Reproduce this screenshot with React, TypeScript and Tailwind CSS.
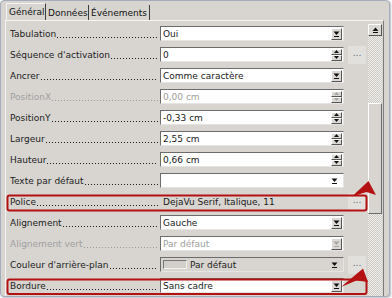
import React from 'react';

/**
 * Control properties panel — form fields of a LibreOffice-style property browser.
 */

type Kind = 'list' | 'spin' | 'combo' | 'color' | 'readonly';

interface Row {
  label: string;
  value: string;
  kind: Kind;
  disabled?: boolean;
  more?: boolean; // shows the "..." button
}

const rows: Row[] = [
  { label: 'Tabulation', value: 'Oui', kind: 'list' },
  { label: "Séquence d'activation", value: '0', kind: 'spin', more: true },
  { label: 'Ancrer', value: 'Comme caractère', kind: 'list' },
  { label: 'PositionX', value: '0,00 cm', kind: 'spin', disabled: true },
  { label: 'PositionY', value: '-0,33 cm', kind: 'spin' },
  { label: 'Largeur', value: '2,55 cm', kind: 'spin' },
  { label: 'Hauteur', value: '0,66 cm', kind: 'spin' },
  { label: 'Texte par défaut', value: '', kind: 'combo' },
  { label: 'Police', value: 'DejaVu Serif, Italique, 11', kind: 'readonly', more: true },
  { label: 'Alignement', value: 'Gauche', kind: 'list' },
  { label: 'Alignement vert', value: 'Par défaut', kind: 'list', disabled: true },
  { label: "Couleur d'arrière-plan", value: 'Par défaut', kind: 'color', more: true },
  { label: 'Bordure', value: 'Sans cadre', kind: 'list' },
];

function DownArrow({ muted }: { muted?: boolean }) {
  const c = muted ? '#a5a5a5' : '#111';
  return (
    <svg width="7" height="6" viewBox="0 0 7 6">
      <polygon points="0.5,0.5 6.5,0.5 3.5,4" fill={c} />
      <rect x="1" y="5" width="5" height="1" fill={c} />
    </svg>
  );
}

function DropButton({ muted }: { muted?: boolean }) {
  return (
    <div className="mr-px flex h-[12px] w-[11px] shrink-0 items-center justify-center border border-t-white border-l-white border-r-[#555] border-b-[#555] bg-[#dcd9d4]">
      <DownArrow muted={muted} />
    </div>
  );
}

function SpinButtons({ muted }: { muted?: boolean }) {
  const c = muted ? '#a5a5a5' : '#111';
  const btn = 'flex h-[6px] w-[11px] items-center justify-center border border-t-white border-l-white border-r-[#555] border-b-[#555] bg-[#dcd9d4]';
  return (
    <div className="mr-px flex shrink-0 flex-col">
      <div className={btn}>
        <svg width="5" height="3" viewBox="0 0 5 3"><polygon points="2.5,0 5,3 0,3" fill={c} /></svg>
      </div>
      <div className={btn}>
        <svg width="5" height="3" viewBox="0 0 5 3"><polygon points="0,0 5,0 2.5,3" fill={c} /></svg>
      </div>
    </div>
  );
}

function Field({ row }: { row: Row }) {
  const tone = row.disabled ? 'text-[#9d9d9d]' : 'text-[#1a1a1a]';

  if (row.kind === 'readonly') {
    return (
      <div className={`ml-[2px] flex h-[15px] w-[184px] items-center pl-[3px] ${tone}`}>{row.value}</div>
    );
  }

  const bg = row.kind === 'color' ? 'bg-[#d8d5d0]' : 'bg-white';

  return (
    <div className={`ml-[2px] flex h-[15px] w-[184px] items-center border border-t-[#6c6c6c] border-l-[#6c6c6c] border-r-[#e6e4e0] border-b-[#e6e4e0] ${bg}`}>
      {row.kind === 'color' ? (
        <div className="flex flex-1 items-center pl-[2px]">
          <div className="h-[9px] w-[24px] border border-t-[#777] border-l-[#777] border-r-[#f2f1ee] border-b-[#f2f1ee] bg-[#d2cfca]" />
          <span className="ml-[3px] text-[#222]">{row.value}</span>
        </div>
      ) : (
        <span className={`flex-1 whitespace-nowrap pl-[2px] ${tone}`}>{row.value}</span>
      )}
      {row.kind === 'list' && <DropButton muted={row.disabled} />}
      {row.kind === 'spin' && <SpinButtons muted={row.disabled} />}
      {(row.kind === 'combo' || row.kind === 'color') && (
        <div className="mr-[5px] flex items-center">
          <DownArrow />
        </div>
      )}
    </div>
  );
}

function PropertyRow({ row }: { row: Row }) {
  const dots = row.disabled ? 'text-[#9a9a9a]' : 'text-[#1e1e1e]';
  return (
    <div className="flex h-[21px] items-center">
      <div className={`flex w-[148px] items-end whitespace-nowrap ${row.disabled ? 'text-[#a0a0a0]' : 'text-[#1c1c1c]'}`}>
        <span>{row.label}</span>
        {/* dotted leader */}
        <span className={`mb-[2px] h-px flex-1 bg-[image:linear-gradient(90deg,currentColor_1px,transparent_1px)] bg-[length:3px_1px] bg-[position:1px_0] ${dots}`} />
      </div>
      <Field row={row} />
      {row.more && (
        <div className="ml-[4px] flex h-[18px] w-[18px] items-center justify-center bg-[#e2e0dc] pb-[3px] text-[#5d6474]">
          ...
        </div>
      )}
    </div>
  );
}

function Scrollbar() {
  return (
    <div className="mt-[3px] flex w-[14px] flex-col">
      <div className="flex h-[12px] items-center justify-center border border-t-white border-l-white border-r-[#555] border-b-[#555] bg-[#dcd9d4]">
        <svg width="7" height="6" viewBox="0 0 7 6">
          <polygon points="3.5,0.5 6.5,4 0.5,4" fill="#111" />
          <rect x="1" y="5" width="5" height="1" fill="#111" />
        </svg>
      </div>
      <div className="h-[67px] bg-[image:repeating-conic-gradient(#cdcac5_0_25%,#efeeeb_0_50%)] bg-[length:2px_2px]" />
      <div className="h-[111px] border border-t-white border-l-white border-r-[#6a6a6a] border-b-[#6a6a6a] bg-[#d8d5d0]" />
      <div className="flex-1 bg-[image:repeating-conic-gradient(#cdcac5_0_25%,#efeeeb_0_50%)] bg-[length:2px_2px]" />
    </div>
  );
}

export default function App() {
  return (
    <div className="relative h-[298px] w-[392px] bg-white text-[9px] leading-[12px] [font-family:'DejaVu_Sans',sans-serif]">
      <div className="flex h-[297px] w-[390px] flex-col overflow-hidden rounded-[4px] border border-[#a3adbb] bg-[#d8d5d0] pl-[4px] pt-[2px] shadow-[1px_1px_2px_rgba(60,70,90,0.35)]">
        {/* Tabs */}
        <div className="flex h-[17px] pl-px">
          <div className="flex w-[40px] items-center border-r border-t border-l border-t-[#f4f3f1] border-l-[#f4f3f1] border-r-[#3d3d3d] pl-[2px] text-[#111]">
            Général
          </div>
          <div className="mt-[2px] flex w-[43px] items-center border-r border-r-[#3d3d3d] pl-[2px] text-[#111]">
            Données
          </div>
          <div className="mt-[2px] flex w-[61px] items-center border-r border-r-[#3d3d3d] pl-[2px] text-[#111]">
            Événements
          </div>
        </div>

        {/* Panel */}
        <div className="flex w-[379px] flex-1 border-l border-t border-r border-l-[#f4f3f1] border-t-[#f4f3f1] border-r-[#7d7d7d] pr-px">
          <div className="w-[362px] pl-[4px] pt-[2px]">
            {rows.map((row) => (
              <PropertyRow key={row.label} row={row} />
            ))}
          </div>
          <Scrollbar />
        </div>
      </div>

      {/* Red annotations */}
      <svg className="pointer-events-none absolute left-0 top-0" width="392" height="298">
        <rect x="7.5" y="195.5" width="359" height="15" rx="2" fill="none" stroke="#b41212" strokeWidth="2" />
        <polygon points="352,196.5 368.5,181 376,195 366.5,192" fill="#b41212" />
        <rect x="7.5" y="279.5" width="359" height="14.5" rx="2" fill="none" stroke="#b41212" strokeWidth="2" />
        <polygon points="341,287 363,268.5 368,282 356.5,280.5" fill="#b41212" />
      </svg>
    </div>
  );
}
